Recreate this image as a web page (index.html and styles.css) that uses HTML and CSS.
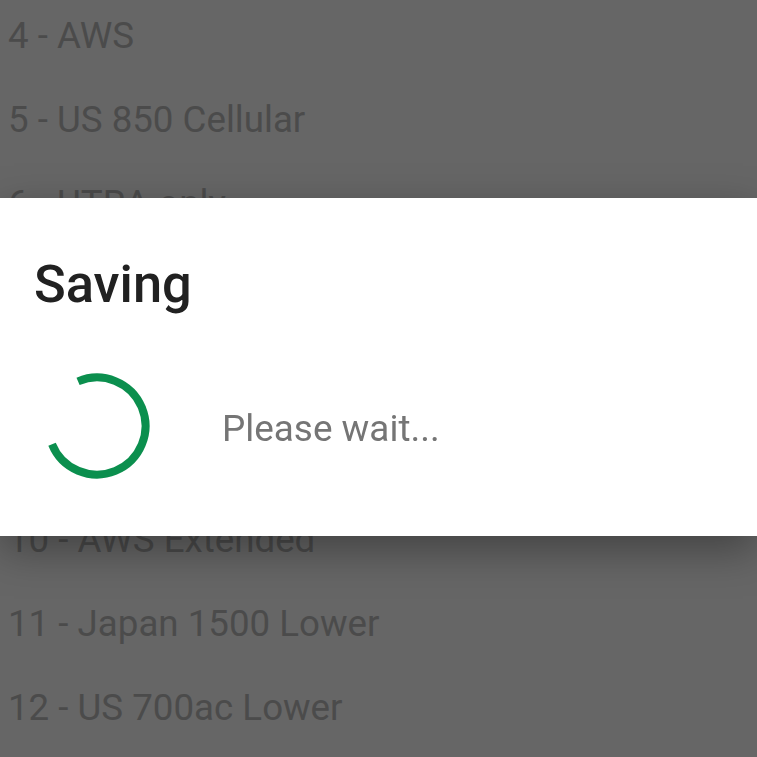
FILE: index.html
```html
<!DOCTYPE html>
<html>
<head>
<meta charset="utf-8">
<link rel="stylesheet" href="styles.css">
</head>
<body>
<ul class="list">
  <li class="row">4 - AWS</li>
  <li class="row">5 - US 850 Cellular</li>
  <li class="row">6 - UTRA only</li>
  <li class="row">7 - Europe 2600</li>
  <li class="row">8 - Europe 900</li>
  <li class="row">9 - Japan 1700</li>
  <li class="row">10 - AWS Extended</li>
  <li class="row">11 - Japan 1500 Lower</li>
  <li class="row">12 - US 700ac Lower</li>
</ul>
<div class="scrim"></div>
<div class="dialog">
  <h1 class="title">Saving</h1>
  <div class="message">
    <svg class="spinner" width="112" height="112" viewBox="0 0 112 112">
      <path d="M37.05 11.36 A48.5 48.5 0 1 1 11.03 74.17" fill="none" stroke="#0b8f4e" stroke-width="8"/>
    </svg>
    <span class="wait">Please wait...</span>
  </div>
</div>
</body>
</html>
```

FILE: styles.css
```css
html, body {
  margin: 0;
  padding: 0;
  background: #ffffff;
  overflow: hidden;
  width: 757px;
  height: 757px;
  font-family: Roboto, "Noto Sans", sans-serif;
}
.list {
  list-style: none;
  margin: -7px 0 0 0;
  padding: 0;
}
.row {
  height: 84px;
  display: flex;
  align-items: center;
  padding-left: 8px;
  font-size: 36.7px;
  color: #bcbcbc;
}
.scrim {
  position: fixed;
  inset: 0;
  background: rgba(0, 0, 0, 0.6);
}
.dialog {
  position: absolute;
  top: 198px;
  left: 0;
  right: 0;
  height: 338px;
  background: #ffffff;
  box-shadow: 0 14px 40px rgba(0, 0, 0, 0.35);
  padding: 0 34px;
  box-sizing: border-box;
}
.title {
  margin: 58px 0 0 0;
  font-size: 52.4px;
  line-height: 56px;
  font-weight: 500;
  color: #212121;
}
.message {
  display: flex;
  align-items: center;
  margin-top: 58px;
  padding-left: 7px;
}
.spinner {
  display: block;
  flex: none;
}
.wait {
  margin-left: 69px;
  margin-top: 4px;
  font-size: 36.9px;
  color: #757575;
}
```
